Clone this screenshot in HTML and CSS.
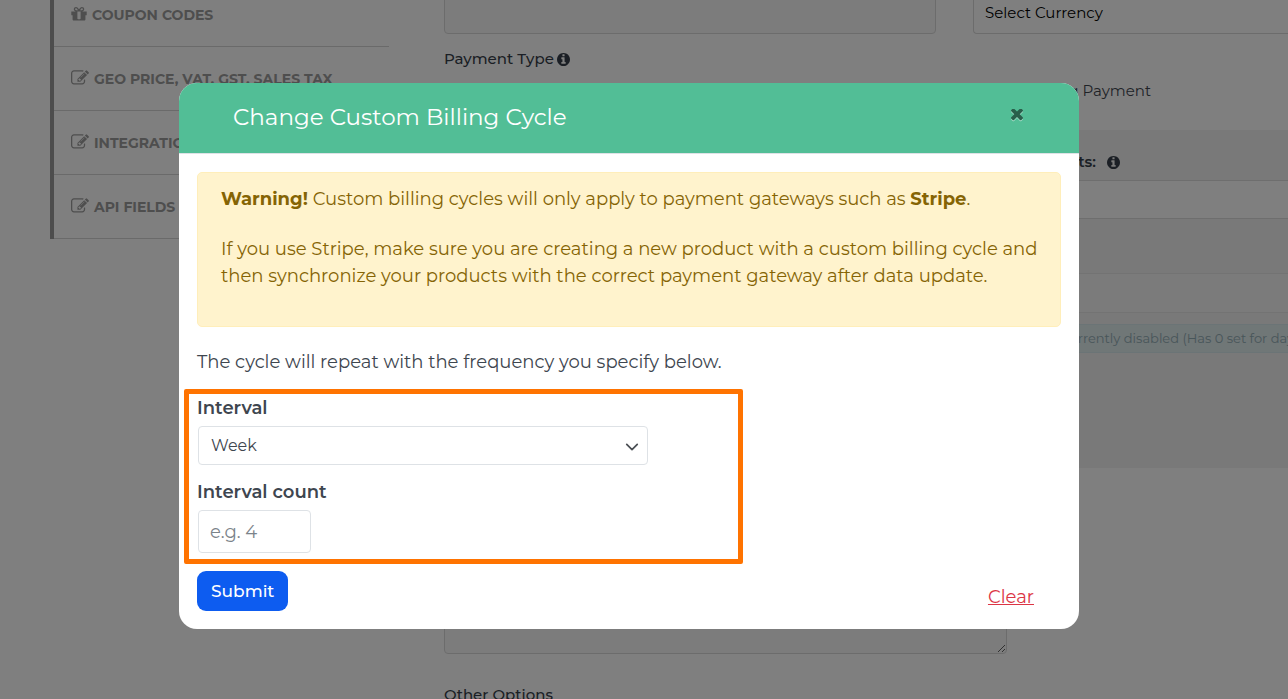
FILE: index.html
```html
<!DOCTYPE html>
<html lang="en">
<head>
<meta charset="utf-8">
<meta name="viewport" content="width=device-width, initial-scale=1">
<title>Change Custom Billing Cycle</title>
<link rel="stylesheet" href="styles.css">
</head>
<body>
<svg class="sprite" aria-hidden="true">
  <symbol id="edit" viewBox="0 0 1792 1792"><path d="M888 1184l116-116-152-152-116 116v56h96v96h56zm440-720q-16-16-33 1l-350 350q-17 17-1 33t33-1l350-350q17-17 1-33zm80 594v190q0 119-84.5 203.5t-203.5 84.5h-832q-119 0-203.5-84.5t-84.5-203.5v-832q0-119 84.5-203.5t203.5-84.5h832q63 0 117 25 15 7 18 23 3 17-9 29l-49 49q-14 14-32 8-23-6-45-6h-832q-66 0-113 47t-47 113v832q0 66 47 113t113 47h832q66 0 113-47t47-113v-126q0-13 9-22l64-64q15-15 35-7t20 29zm-96-738l288 288-672 672h-288v-288zm444 132l-92 92-288-288 92-92q28-28 68-28t68 28l152 152q28 28 28 68t-28 68z"/></symbol>
  <symbol id="gift" viewBox="128 0 1536 1792"><path d="M1056 1356v-716h-320v716q0 25 18 38.5t46 13.5h192q28 0 46-13.5t18-38.5zm-456-844h195l-126-161q-26-31-69-31-40 0-68 28t-28 68 28 68 68 28zm688-96q0-40-28-68t-68-28q-43 0-69 31l-125 161h194q40 0 68-28t28-68zm376 256v320q0 14-9 23t-23 9h-96v416q0 40-28 68t-68 28h-1088q-40 0-68-28t-28-68v-416h-96q-14 0-23-9t-9-23v-320q0-14 9-23t23-9h440q-93 0-158.5-65.5t-65.5-158.5 65.5-158.5 158.5-65.5q107 0 168 77l128 165 128-165q61-77 168-77 93 0 158.5 65.5t65.5 158.5-65.5 158.5-158.5 65.5h440q14 0 23 9t9 23z"/></symbol>
  <symbol id="info" viewBox="128 128 1536 1536"><path d="M1152 1376v-160q0-14-9-23t-23-9h-96v-512q0-14-9-23t-23-9h-320q-14 0-23 9t-9 23v160q0 14 9 23t23 9h96v320h-96q-14 0-23 9t-9 23v160q0 14 9 23t23 9h448q14 0 23-9t9-23zm-128-896v-160q0-14-9-23t-23-9h-192q-14 0-23 9t-9 23v160q0 14 9 23t23 9h192q14 0 23-9t9-23zm640 416q0 209-103 385.5t-279.5 279.5-385.5 103-385.5-103-279.5-279.5-103-385.5 103-385.5 279.5-279.5 385.5-103 385.5 103 279.5 279.5 103 385.5z"/></symbol>
  <symbol id="times" viewBox="302 434 1188 1188"><path d="M1490 1322q0 40-28 68l-136 136q-28 28-68 28t-68-28l-294-294-294 294q-28 28-68 28t-68-28l-136-136q-28-28-28-68t28-68l294-294-294-294q-28-28-28-68t28-68l136-136q28-28 68-28t68 28l294 294 294-294q28-28 68-28t68 28l136 136q28 28 28 68t-28 68l-294 294 294 294q28 28 28 68z"/></symbol>
</svg>

<div class="page">
  <nav class="sidebar">
    <a class="side-link" href="#coupons"><svg class="side-icon gift"><use href="#gift"/></svg>COUPON CODES</a>
    <a class="side-link" href="#geo"><svg class="side-icon"><use href="#edit"/></svg>GEO PRICE, VAT, GST, SALES TAX</a>
    <a class="side-link" href="#integrations"><svg class="side-icon"><use href="#edit"/></svg>INTEGRATIONS</a>
    <a class="side-link" href="#api"><svg class="side-icon"><use href="#edit"/></svg>API FIELDS</a>
  </nav>
  <main class="content">
    <div class="columns">
      <input class="field" type="text" aria-label="Price">
      <select class="field currency" aria-label="Currency"><option>Select Currency</option></select>
    </div>
    <p class="label">Payment Type <svg class="info"><use href="#info"/></svg></p>
    <div class="columns options">
      <span></span>
      <label class="radio"><input type="radio" name="type"><span>Recurring Payment</span></label>
    </div>
    <section class="panel">
      <label class="label panel-label" for="payments"><span class="panel-title">Payments:</span><svg class="info"><use href="#info"/></svg></label>
      <input class="panel-field" id="payments" type="text">
      <input class="panel-field muted" type="text" aria-label="Trial" disabled>
      <p class="notice">Trial is currently disabled (Has 0 set for days)</p>
    </section>
    <textarea class="notes" aria-label="Notes"></textarea>
    <p class="label other">Other Options</p>
  </main>
</div>

<div class="backdrop">
  <div class="modal" role="dialog" aria-labelledby="title">
    <header class="modal-head">
      <h1 class="modal-title" id="title">Change Custom Billing Cycle</h1>
      <button class="close" type="button" aria-label="Close"><svg class="close-icon"><use href="#times"/></svg></button>
    </header>
    <form class="modal-body">
      <div class="warning">
        <p><strong>Warning!</strong> Custom billing cycles will only apply to payment gateways such as <strong>Stripe</strong>.</p>
        <p>If you use Stripe, make sure you are creating a new product with a custom billing cycle and then synchronize your products with the correct payment gateway after data update.</p>
      </div>
      <p class="intro">The cycle will repeat with the frequency you specify below.</p>
      <div class="highlight">
        <label class="form-label" for="interval">Interval</label>
        <div class="select-wrap">
          <select class="control interval" id="interval"><option>Week</option></select>
          <svg class="chevron" viewBox="0 0 16 16"><path d="M2 5l6 6 6-6"/></svg>
        </div>
        <label class="form-label" for="count">Interval count</label>
        <input class="control count" id="count" type="text" placeholder="e.g. 4">
      </div>
      <div class="actions">
        <button class="submit" type="submit">Submit</button>
        <a class="clear" href="#clear">Clear</a>
      </div>
    </form>
  </div>
</div>
</body>
</html>
```
FILE: styles.css
```css
* { box-sizing: border-box; }

body {
  margin: 0;
  height: 100vh;
  overflow: hidden;
  background: #fff;
  color: #3e464f;
  font: 18px/27px Montserrat, Inter, "Open Sans", sans-serif;
}

p, h1 { margin: 0; }
input, select, textarea, button { font: inherit; color: inherit; }
svg { fill: currentColor; flex: none; }
.sprite { position: absolute; width: 0; height: 0; }

/* Page under the dialog */
.page {
  display: flex;
  align-items: flex-start;
  height: 100vh;
  overflow: hidden;
  padding-left: 50px;
  font-size: 15px;
  line-height: 24px;
}
.sidebar {
  width: 339px;
  flex: none;
  margin-top: -17px;
  border-left: 4px solid #9b9b9b;
}
.side-link {
  display: flex;
  align-items: center;
  gap: 5px;
  height: 64px;
  padding-left: 17px;
  border-bottom: 1px solid #d4d4d4;
  color: #9c9c9c;
  font-size: 14px;
  font-weight: 700;
  text-decoration: none;
  white-space: nowrap;
}
.side-icon { width: 18px; height: 18px; margin-bottom: 2px; }
.gift { width: 16px; }

.content { flex: 1; min-width: 0; padding-left: 55px; }
.columns {
  display: grid;
  grid-template-columns: minmax(0, 492px) minmax(315px, 1fr);
  column-gap: 37px;
}
.field {
  height: 42px;
  margin-top: -8px;
  padding: 0 11px;
  border: 1px solid #d9d9d9;
  border-radius: 4px;
  background: #f8f8f8;
}
.currency {
  appearance: none;
  border-right: 0;
  border-radius: 4px 0 0 4px;
  background: #fff;
  color: #000;
}
.label {
  display: flex;
  align-items: center;
  gap: 3px;
  margin-top: 13px;
  color: #373f4a;
  font-weight: 500;
}
.info { width: 13px; height: 13px; }
.options { margin-top: 8px; }
.radio { display: flex; align-items: center; justify-content: flex-end; width: 178px; gap: 6px; }
.radio input { margin: 0; }
.panel {
  height: 338px;
  margin-top: 27px;
  padding-top: 20px;
  background: #f2f2f2;
}
.panel-label { gap: 11px; margin: 0 0 6px; font-weight: 600; }
.panel-title { width: 652px; text-align: right; }
.panel-field {
  display: block;
  width: 100%;
  height: 39px;
  border: solid #dcdcdc;
  border-width: 1px 0;
  background: #fff;
}
.muted { height: 40px; margin-top: 54px; border-color: #e6e6e6; background: #f6f6f6; }
.notice {
  height: 29px;
  margin: 11px 0 0 574px;
  border: solid #d6e8ec;
  border-width: 1px 0;
  background: #e1eeef;
  color: #91adb4;
  font-size: 13px;
  line-height: 27px;
  white-space: nowrap;
}
.notes {
  display: block;
  width: 563px;
  height: 126px;
  max-width: 100%;
  margin-top: 60px;
  border: 1px solid #d9d9d9;
  border-radius: 4px;
  background: #f8f8f8;
}
.other { margin-top: 29px; }

/* Dialog */
.backdrop {
  position: fixed;
  inset: 0;
  display: flex;
  justify-content: center;
  align-items: flex-start;
  padding: 83px 30px 0 0;
  background: rgba(0, 0, 0, 0.5);
}
.modal {
  width: 900px;
  max-width: 100%;
  overflow: hidden;
  border-radius: 18px;
  background: #fff;
}
.modal-head {
  display: flex;
  align-items: center;
  justify-content: space-between;
  height: 71px;
  padding: 0 56px 3px 54px;
  border-bottom: 1px solid #dee2e6;
  background: #52be96;
  color: #fff;
}
.modal-title { font-size: 23px; font-weight: 400; line-height: 36px; }
.close {
  display: flex;
  margin-bottom: 3px;
  padding: 0;
  border: 0;
  background: none;
  color: #295f4b;
}
.close-icon { width: 12px; height: 12px; filter: drop-shadow(0 1px 0 #a8dfcb); }
.modal-body { padding: 18px; }
.warning {
  display: grid;
  gap: 23px;
  padding: 13px 18px 36px 23px;
  border: 1px solid #ffeeba;
  border-radius: 5px;
  background: #fff3cd;
  color: #856404;
}
.warning strong { font-weight: 700; }
.intro { margin-top: 22px; }
.highlight {
  max-width: 559px;
  margin: 13px 0 0 -13px;
  padding: 1px 8px 6px;
  border: 5px solid #ff7300;
  border-radius: 2px;
}
.form-label { display: block; padding-bottom: 4px; font-weight: 600; }
.select-wrap { position: relative; max-width: 450px; margin: 0 1px 14px; }
.control {
  display: block;
  border: 1px solid #dee2e6;
  border-radius: 4px;
  background: #fff;
  padding: 0 11px;
}
.interval { appearance: none; width: 100%; height: 39px; padding: 0 12px; font-size: 16px; }
.chevron {
  position: absolute;
  top: 14px;
  right: 9px;
  width: 14px;
  height: 14px;
  fill: none;
  stroke: #4b4f54;
  stroke-width: 2;
  stroke-linecap: round;
  stroke-linejoin: round;
  pointer-events: none;
}
.count { width: 113px; height: 43px; margin-left: 1px; }
.count::placeholder { color: #7b838a; opacity: 1; }
.actions {
  display: flex;
  align-items: flex-start;
  justify-content: space-between;
  padding: 7px 27px 0 0;
}
.submit {
  height: 40px;
  padding: 0 14px;
  border: 0;
  border-radius: 9px;
  background: #0d5cf0;
  color: #fff;
  font-size: 17px;
  font-weight: 500;
}
.clear { margin-top: 13px; color: #dc3545; }
```
